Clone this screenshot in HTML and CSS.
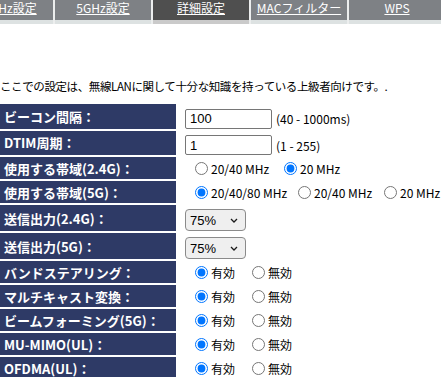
FILE: index.html
```html
<!DOCTYPE html>
<html lang="ja">
<head>
<meta charset="utf-8">
<title>詳細設定</title>
<link rel="stylesheet" href="styles.css">
</head>
<body>
<nav class="tabs">
  <a class="tab">2.4GHz設定</a>
  <a class="tab">5GHz設定</a>
  <a class="tab active">詳細設定</a>
  <a class="tab">MACフィルター</a>
  <a class="tab">WPS</a>
</nav>
<p class="note">ここでの設定は、無線LANに関して十分な知識を持っている上級者向けです。.</p>
<table class="settings">
  <tr class="r-input">
    <th>ビーコン間隔：</th>
    <td><input class="num" type="text" value="100"><span class="hint">(40 - 1000ms)</span></td>
  </tr>
  <tr class="r-input">
    <th>DTIM周期：</th>
    <td><input class="num" type="text" value="1"><span class="hint">(1 - 255)</span></td>
  </tr>
  <tr class="r-radio">
    <th>使用する帯域(2.4G)：</th>
    <td><div class="opts b24">
      <label class="opt"><input type="radio" name="b24">20/40 MHz</label>
      <label class="opt"><input type="radio" name="b24" checked>20 MHz</label>
    </div></td>
  </tr>
  <tr class="r-radio">
    <th>使用する帯域(5G)：</th>
    <td><div class="opts b5">
      <label class="opt"><input type="radio" name="b5" checked>20/40/80 MHz</label>
      <label class="opt"><input type="radio" name="b5">20/40 MHz</label>
      <label class="opt"><input type="radio" name="b5">20 MHz</label>
    </div></td>
  </tr>
  <tr class="r-select">
    <th>送信出力(2.4G)：</th>
    <td><span class="selwrap"><select class="sel"><option>75%</option></select><svg class="chev" viewBox="0 0 8 5" width="8" height="5"><path d="M1 1l3 3 3-3" fill="none" stroke="#1a1a1a" stroke-width="1.3"/></svg></span></td>
  </tr>
  <tr class="r-select">
    <th>送信出力(5G)：</th>
    <td><span class="selwrap"><select class="sel"><option>75%</option></select><svg class="chev" viewBox="0 0 8 5" width="8" height="5"><path d="M1 1l3 3 3-3" fill="none" stroke="#1a1a1a" stroke-width="1.3"/></svg></span></td>
  </tr>
  <tr class="r-radio">
    <th>バンドステアリング：</th>
    <td><div class="opts en">
      <label class="opt"><input type="radio" name="bs" checked>有効</label>
      <label class="opt"><input type="radio" name="bs">無効</label>
    </div></td>
  </tr>
  <tr class="r-radio">
    <th>マルチキャスト変換：</th>
    <td><div class="opts en">
      <label class="opt"><input type="radio" name="mc" checked>有効</label>
      <label class="opt"><input type="radio" name="mc">無効</label>
    </div></td>
  </tr>
  <tr class="r-radio">
    <th>ビームフォーミング(5G)：</th>
    <td><div class="opts en">
      <label class="opt"><input type="radio" name="bf" checked>有効</label>
      <label class="opt"><input type="radio" name="bf">無効</label>
    </div></td>
  </tr>
  <tr class="r-radio">
    <th>MU-MIMO(UL)：</th>
    <td><div class="opts en">
      <label class="opt"><input type="radio" name="mu" checked>有効</label>
      <label class="opt"><input type="radio" name="mu">無効</label>
    </div></td>
  </tr>
  <tr class="r-radio">
    <th>OFDMA(UL)：</th>
    <td><div class="opts en">
      <label class="opt"><input type="radio" name="of" checked>有効</label>
      <label class="opt"><input type="radio" name="of">無効</label>
    </div></td>
  </tr>
</table>
</body>
</html>
```

FILE: styles.css
```css
html, body {
  margin: 0;
  padding: 0;
  background: #fff;
  overflow: hidden;
}
body {
  font-family: "Noto Sans CJK JP", sans-serif;
  color: #000;
  width: 441px;
  height: 377px;
}
.tabs {
  display: flex;
  gap: 2px;
  margin-left: -43px;
  background: #eceeee;
}
.tab {
  flex: 0 0 96px;
  height: 20px;
  line-height: 15px;
  border-bottom: 4px solid #dde2e2;
  background: #7e8185;
  background-clip: padding-box;
  color: #fff;
  font-size: 12px;
  text-align: center;
  text-decoration: underline;
  text-underline-offset: 1px;
  white-space: nowrap;
}
.tab.active {
  background-color: #4f4f4f;
  border-bottom-color: #cacaca;
}
.note {
  margin: 54px 0 0 0;
  font-size: 11.5px;
  line-height: 16px;
  letter-spacing: -0.4px;
  white-space: nowrap;
}
.settings {
  margin-top: 8px;
  border-collapse: separate;
  border-spacing: 0 2px;
}
.settings th {
  width: 172px;
  padding: 0 0 0 4px;
  background: #2e3a66;
  color: #fff;
  font-size: 13px;
  font-weight: bold;
  text-align: left;
  white-space: nowrap;
}
.settings td {
  padding: 0 0 0 9px;
  white-space: nowrap;
}
.r-input th { height: 22px; }
.r-radio th { height: 22px; }
.r-select th { height: 26px; }
.num {
  box-sizing: border-box;
  width: 87px;
  height: 20px;
  margin: 0;
  padding: 0 4px;
  border: 1px solid #767676;
  border-radius: 2px;
  font: 13px "Liberation Sans", Arial, sans-serif;
  vertical-align: middle;
}
.hint {
  margin-left: 4px;
  font-size: 12px;
  vertical-align: middle;
}
.opts {
  display: flex;
  align-items: center;
  font-size: 12px;
}
.opt {
  display: inline-flex;
  align-items: center;
}
.opt input {
  width: 13px;
  height: 13px;
  margin: 0 3px 0 10px;
}
.b24 .opt:first-child { width: 89px; }
.b5 .opt:nth-child(1) { width: 103px; }
.b5 .opt:nth-child(2) { width: 86px; }
.en .opt:first-child { width: 57px; }
.selwrap {
  position: relative;
  display: inline-block;
  vertical-align: middle;
}
.sel {
  appearance: none;
  -webkit-appearance: none;
  box-sizing: border-box;
  width: 61px;
  height: 22px;
  margin: 0;
  padding: 0 0 0 4px;
  border: 1px solid #8a8a8a;
  border-radius: 4px;
  background: #efefef;
  color: #000;
  font: 13px "Liberation Sans", Arial, sans-serif;
  display: block;
}
.chev {
  position: absolute;
  right: 8px;
  top: 9px;
  pointer-events: none;
}
```
